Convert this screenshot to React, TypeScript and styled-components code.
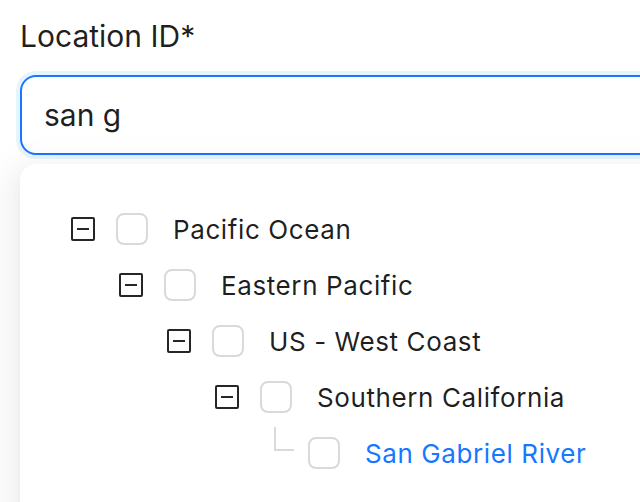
import React from "react";
import styled, { createGlobalStyle } from "styled-components";

const GlobalStyle = createGlobalStyle`
  html, body { margin: 0; padding: 0; background: #ffffff; overflow: hidden; }
  body { font-family: Inter, "Noto Sans", sans-serif; color: rgba(0,0,0,0.88); }
`;

const Page = styled.div`
  width: 720px;
  padding: 14px 0 0 20px;
`;

const Label = styled.div`
  font-size: 30px;
  line-height: 44px;
  margin-bottom: 17px;
`;

const InputBox = styled.div`
  height: 80px;
  box-sizing: border-box;
  border: 2px solid #1677ff;
  border-radius: 16px;
  box-shadow: 0 0 0 4px rgba(5, 145, 255, 0.1);
  display: flex;
  align-items: center;
  padding: 0 22px;
  font-size: 30px;
  background: #fff;
`;

const Panel = styled.div`
  position: relative;
  margin-top: 9px;
  background: #fff;
  border-radius: 16px;
  box-shadow: 0 12px 32px 16px rgba(0, 0, 0, 0.05), 0 6px 12px 0 rgba(0,0,0,0.04);
  padding: 37px 0 40px 39px;
  height: 400px;
`;

const Row = styled.div<{ $level: number }>`
  display: flex;
  align-items: center;
  height: 56px;
  padding-left: ${(p) => p.$level * 48}px;
`;

const SwitchCell = styled.div`
  width: 48px;
  height: 56px;
  display: flex;
  align-items: center;
  justify-content: center;
  flex-shrink: 0;
`;

const LeafCell = styled.div`
  width: 48px;
  height: 56px;
  display: flex;
  padding: 2px 0 0 23px;
  box-sizing: border-box;
  flex-shrink: 0;
`;

const LeafLine = styled.span`
  width: 20px;
  height: 24px;
  border-left: 2px solid #d9d9d9;
  border-bottom: 2px solid #d9d9d9;
  box-sizing: border-box;
`;

const Switcher = styled.span`
  width: 24px;
  height: 24px;
  box-sizing: border-box;
  border: 2px solid #262626;
  border-radius: 2px;
  display: flex;
  align-items: center;
  justify-content: center;
  &::after {
    content: "";
    width: 12px;
    height: 2px;
    background: #262626;
  }
`;

const Checkbox = styled.span`
  width: 32px;
  height: 32px;
  box-sizing: border-box;
  border: 2px solid #d9d9d9;
  border-radius: 8px;
  margin-left: 9px;
  margin-right: 25px;
  flex-shrink: 0;
  background: #fff;
`;

const Title = styled.span<{ $match?: boolean }>`
  font-size: 26px;
  letter-spacing: 0.6px;
  white-space: nowrap;
  color: ${(p) => (p.$match ? "#1677ff" : "rgba(0,0,0,0.88)")};
`;

const nodes = [
  { title: "Pacific Ocean", level: 0, leaf: false },
  { title: "Eastern Pacific", level: 1, leaf: false },
  { title: "US - West Coast", level: 2, leaf: false },
  { title: "Southern California", level: 3, leaf: false },
  { title: "San Gabriel River", level: 4, leaf: true, match: true },
];

export default function App() {
  return (
    <>
      <GlobalStyle />
      <Page>
        <Label>Location ID*</Label>
        <InputBox>san g</InputBox>
        <Panel>
          {nodes.map((n) => (
            <Row key={n.title} $level={n.level}>
              {n.leaf ? (
                <LeafCell>
                  <LeafLine />
                </LeafCell>
              ) : (
                <SwitchCell>
                  <Switcher />
                </SwitchCell>
              )}
              <Checkbox />
              <Title $match={n.match}>{n.title}</Title>
            </Row>
          ))}
        </Panel>
      </Page>
    </>
  );
}
